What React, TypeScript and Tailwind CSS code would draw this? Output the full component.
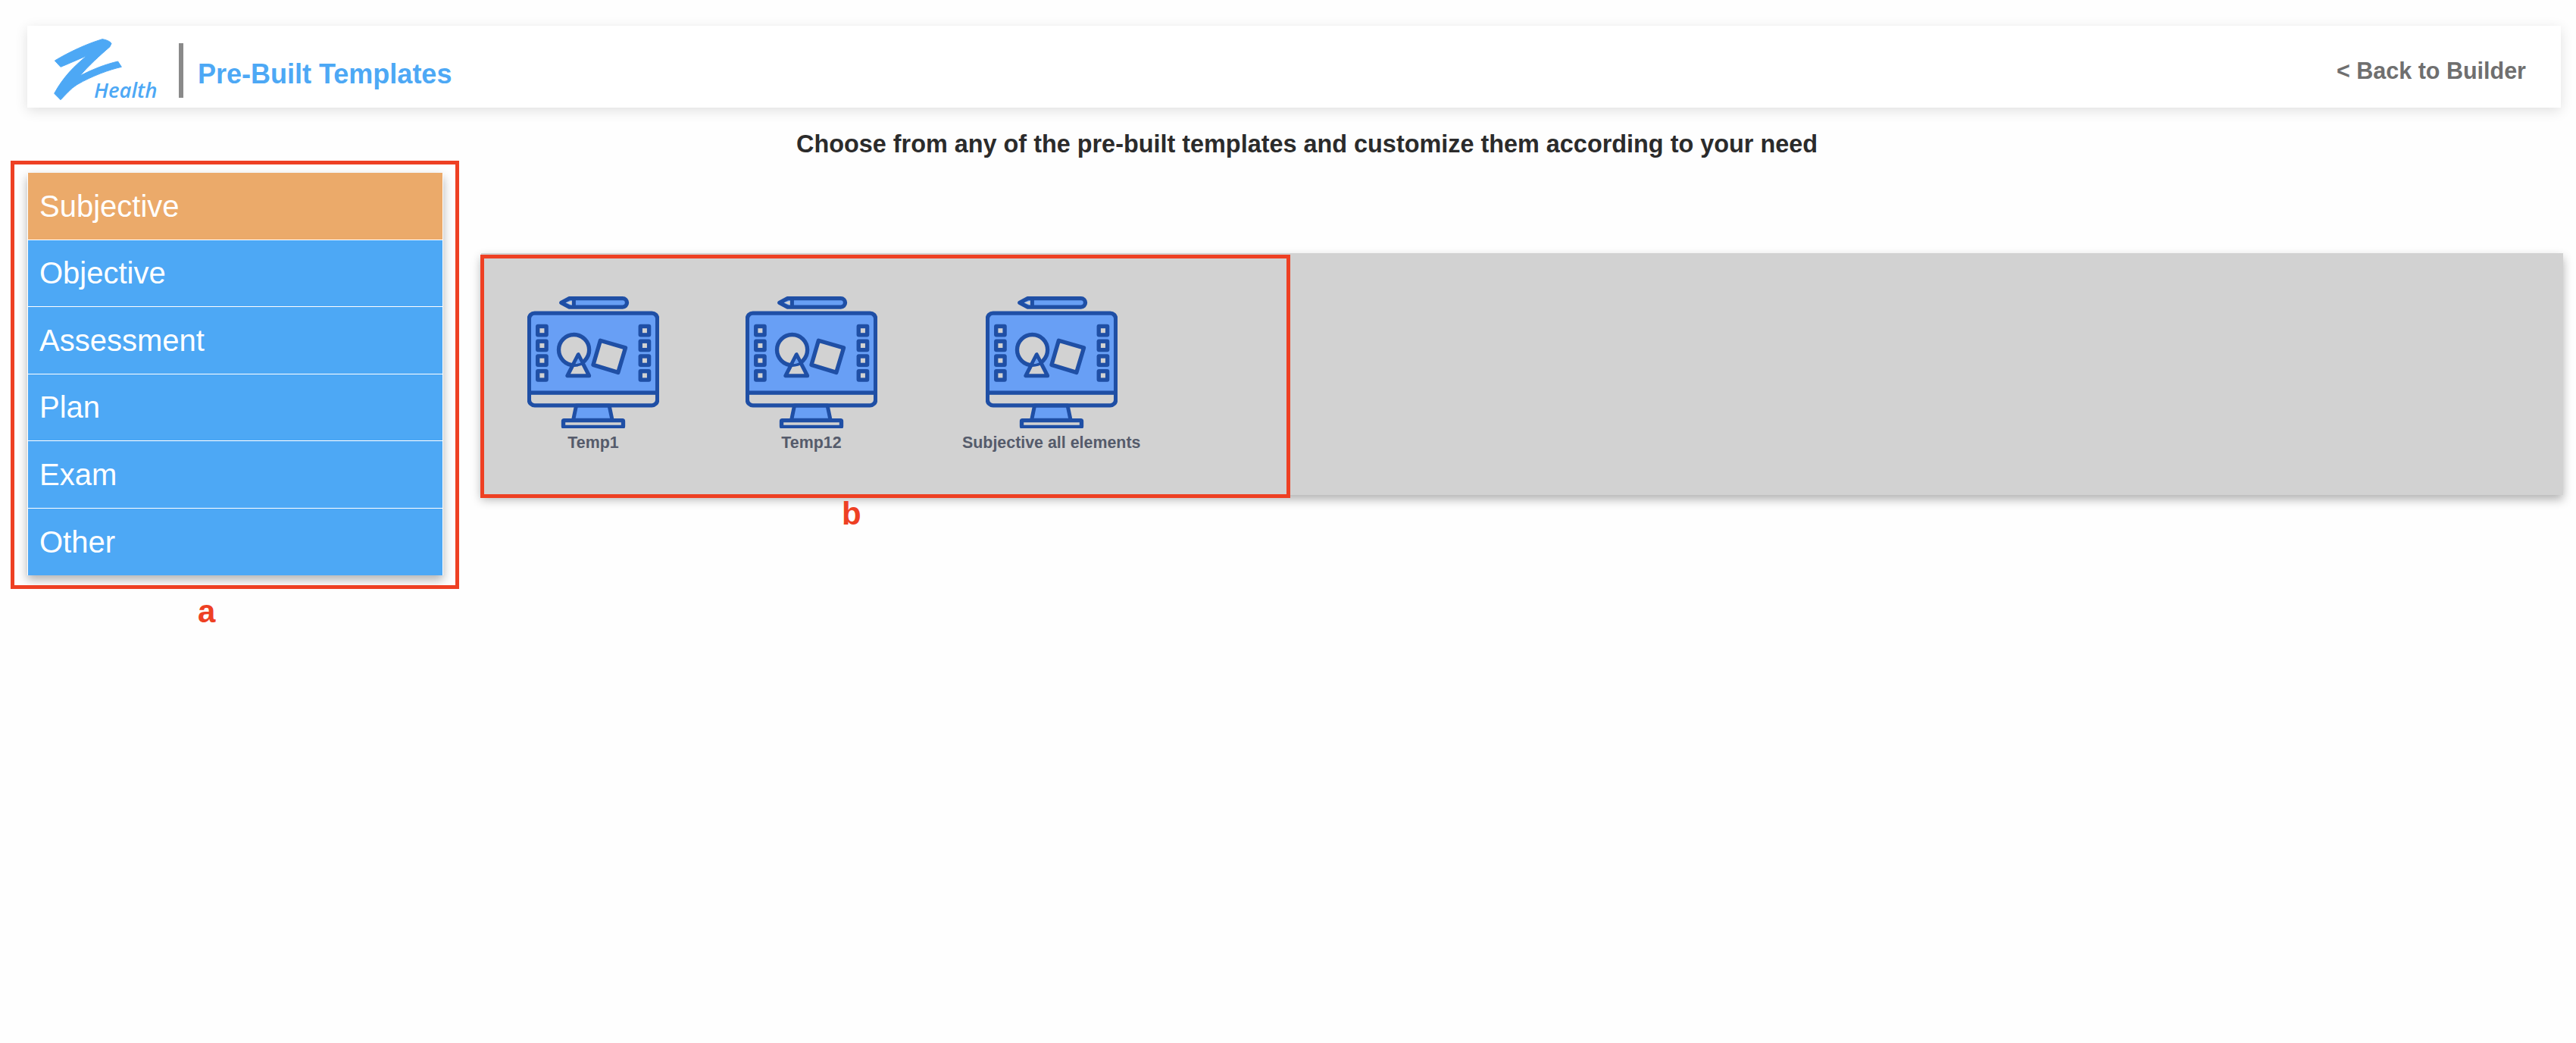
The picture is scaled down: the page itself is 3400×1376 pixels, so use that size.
import React from 'react';

const MonitorIcon = () => (
  <svg viewBox="112 62 520 520" className="w-[174px] h-[174px] shrink-0">
    {/* pencil */}
    <path d="M246 87 L278 70 H488 a17 17 0 0 1 0 34 H278 Z" fill="#689ff5" stroke="#1f4fa5" strokeWidth="16" strokeLinejoin="round" />
    <path d="M264 87 L288 79 V96 Z" fill="#d2d2d2" />
    <rect x="288" y="70" width="15" height="34" fill="#1f4fa5" />
    {/* monitor */}
    <path d="M119 441 V150 a22 22 0 0 1 22 -22 H603 a22 22 0 0 1 22 22 V441 Z" fill="#689ff5" />
    <path d="M305 492 H435 L447 550 H293 Z" fill="#689ff5" stroke="#1f4fa5" strokeWidth="15" strokeLinejoin="round" />
    <rect x="119" y="128" width="506" height="364" rx="22" fill="none" stroke="#1f4fa5" strokeWidth="16" />
    <rect x="119" y="434" width="506" height="16" fill="#1f4fa5" />
    <rect x="254" y="551" width="236" height="26" rx="3" fill="#d2d2d2" stroke="#1f4fa5" strokeWidth="16" />
    {/* side buttons */}
    {[172, 231, 290, 349].map((y) => (
      <g key={y}>
        <rect x="145" y={y} width="50" height="50" rx="9" fill="#1f4fa5" />
        <rect x="161" y={y + 16} width="18" height="18" fill="#d2d2d2" />
        <rect x="550" y={y} width="50" height="50" rx="9" fill="#1f4fa5" />
        <rect x="566" y={y + 16} width="18" height="18" fill="#d2d2d2" />
      </g>
    ))}
    {/* shapes */}
    <circle cx="296" cy="273" r="60" fill="#d2d2d2" stroke="#1f4fa5" strokeWidth="16" />
    <path d="M313 291 L270 375 H356 Z" fill="#d2d2d2" stroke="#1f4fa5" strokeWidth="15" strokeLinejoin="round" />
    <path d="M313 306 L302 327 H324 Z" fill="#689ff5" />
    <path d="M283 333 Q312 338 337 322" fill="none" stroke="#1f4fa5" strokeWidth="11" />
    <path d="M400 236 L499 265 L470 362 L372 332 Z" fill="#d2d2d2" stroke="#1f4fa5" strokeWidth="16" strokeLinejoin="round" />
  </svg>
);

const Logo = () => (
  <div className="relative w-[135px] h-[80px]">
    <svg viewBox="0 0 330 285" className="absolute -left-[7px] -top-[8px] w-[110px] h-[95px]">
      <path
        d="M22 105 C80 70 150 38 210 20 C225 22 240 28 246 37 L240 50 C200 85 155 125 122 165 C170 140 220 120 272 108 L286 130 C240 140 170 165 110 200 C85 215 65 240 45 260 L20 235 C55 170 100 125 150 85 C115 100 75 118 45 130 Z"
        fill="#4da8f5"
        stroke="#4da8f5"
        strokeWidth="3"
        strokeLinejoin="round"
      />
    </svg>
    <span className="absolute left-[52px] top-[50px] font-['Open_Sans',sans-serif] font-semibold text-[27.5px] leading-[32px] italic text-[#4da8f5]">Health</span>
  </div>
);

const categories = ['Subjective', 'Objective', 'Assessment', 'Plan', 'Exam', 'Other'];
const templates = ['Temp1', 'Temp12', 'Subjective all elements'];

export default function App() {
  return (
    <div className="relative min-h-[1376px] w-full bg-[#fefefe] font-['Liberation_Sans',Arial,sans-serif] overflow-hidden">
      <div className="pt-[34px] pl-[36px] pr-[20px]">
        <header className="flex items-center justify-between h-[108px] bg-white shadow-[0_4px_16px_rgba(0,0,0,0.12)] pt-[10px] pl-[36px] pr-[46px]">
          <div className="flex items-center">
            <Logo />
            <div className="w-[6px] h-[72px] bg-[#8a8a8a] ml-[29px] mr-[19px]" />
            <h1 className="text-[36px] font-bold text-[#4da8f5] mt-[10px]">Pre-Built Templates</h1>
          </div>
          <a href="#back" className="mt-[2px] text-[30.5px] font-bold text-[#6f6f6f]">&lt; Back to Builder</a>
        </header>
      </div>

      <p className="h-[86px] pt-[26px] pl-[50px] text-center text-[32.4px] leading-[44px] font-bold text-[#2b2b2b]">
        Choose from any of the pre-built templates and customize them according to your need
      </p>

      <div className="flex items-start pl-[36px] pr-[17px]">
        <ul className="w-[549px] shrink-0 border-x border-white divide-y divide-white shadow-[0_6px_12px_rgba(0,0,0,0.3)]">
          {categories.map((c, i) => (
            <li
              key={c}
              className={`h-[88.5px] flex items-center px-[15px] text-[40px] text-white ${
                i === 0 ? 'bg-[#ebaa6a]' : 'bg-[#4da8f5]'
              }`}
            >
              {c}
            </li>
          ))}
        </ul>

        <div className="ml-[50px] mt-[106px] flex-1 h-[319px] flex items-start px-[4px] pt-[57px] bg-[#d2d2d2] shadow-[0_6px_12px_rgba(0,0,0,0.3)]">
          {templates.map((t) => (
            <div key={t} className="flex flex-col items-center px-[57px]">
              <MonitorIcon />
              <span className="-mx-[2px] mt-[6px] text-[21.4px] leading-[26px] font-bold text-[#555b6b] whitespace-nowrap">{t}</span>
            </div>
          ))}
        </div>
      </div>

      {/* red annotations drawn over the screenshot */}
      <div className="absolute left-[14px] top-[212px] w-[592px] h-[565px] border-[5px] border-[#ee4023]" />
      <span className="absolute left-[261px] top-[783px] text-[42px] leading-[48px] font-bold text-[#ee4023]">a</span>
      <div className="absolute left-[634px] top-[336px] w-[1069px] h-[321px] border-[5px] border-[#ee4023]" />
      <span className="absolute left-[1111px] top-[654px] text-[42px] leading-[48px] font-bold text-[#ee4023]">b</span>
    </div>
  );
}
